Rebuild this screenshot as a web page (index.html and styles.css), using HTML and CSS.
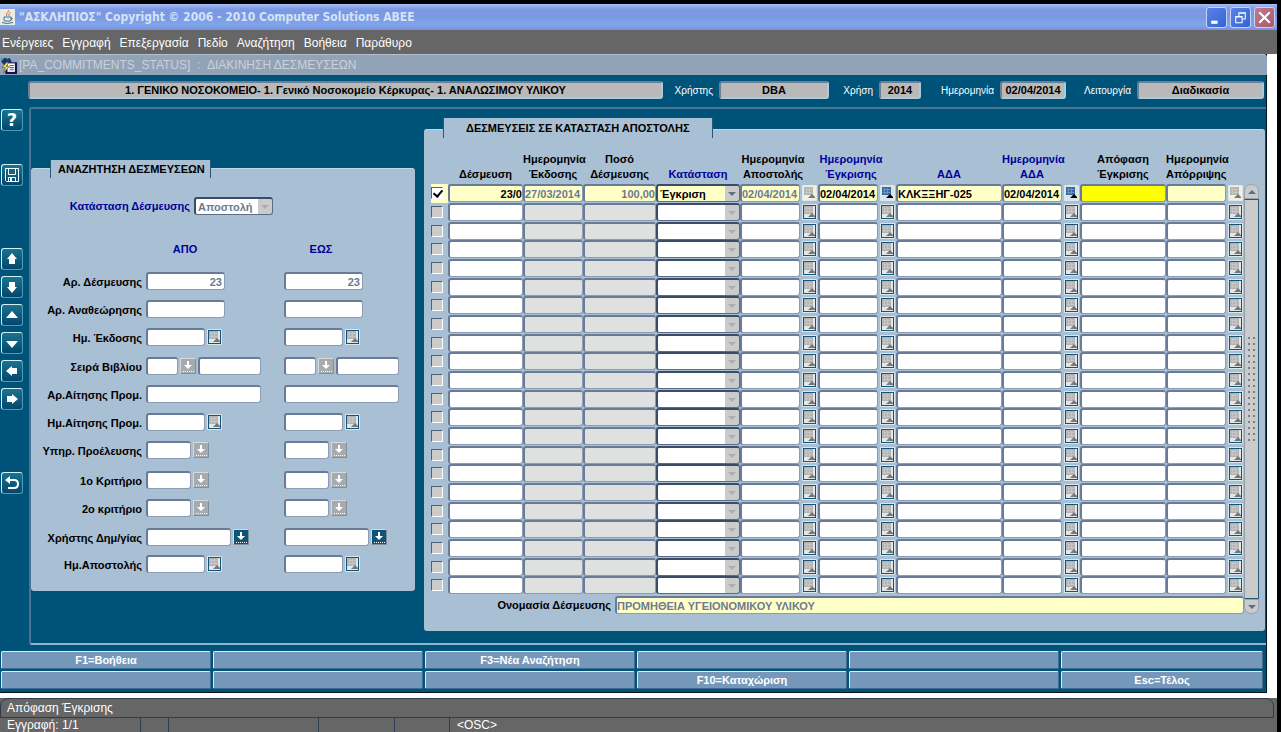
FILE: index.html
```html
<!DOCTYPE html>
<html lang="el">
<head>
  <meta charset="UTF-8" />
  <meta name="viewport" content="width=device-width, initial-scale=1.0" />
  <title>"ΑΣΚΛΗΠΙΟΣ" Copyright © 2006 - 2010 Computer Solutions ABEE</title>
  <link rel="stylesheet" href="styles.css">
</head>
<body>
  <svg class="defs" aria-hidden="true">
    <symbol id="cal" viewBox="0 0 11 12">
      <path class="cal-grid" d="M0 0h9v8h-9z" />
      <path class="cal-lines" d="M1 2.500h7M1 5.500h7M2.500 1v6M5.500 1v6" />
      <path class="cal-tri" d="M4 11l4-4 3 3v1z" />
    </symbol>
    <symbol id="lov" viewBox="0 0 12 13">
      <path d="M5 1h2v4h3L6 9 2 5h3z" fill="#fff" />
      <path d="M1 11.500h11" stroke="#fff" stroke-dasharray="1 1" />
    </symbol>
  </svg>

  <header class="titlebar">
    <svg class="java" viewBox="0 0 15 16" aria-hidden="true">
      <rect width="15" height="16" fill="#e9ebe6" />
      <path d="M8 1c2 2-3 3-1 6M10 3c1 1-2 2-1 4" stroke="#d9661f" fill="none" />
      <path d="M4 8h7v3q0 1-1 1H5q-1 0-1-1zM11 9h1q1 1-1 2" stroke="#3f6f98" fill="none" />
      <path d="M2 13.500q5 2 11 0" stroke="#3f6f98" fill="none" />
    </svg>
    <h1>"ΑΣΚΛΗΠΙΟΣ" Copyright © 2006 - 2010 Computer Solutions ABEE</h1>
    <div class="win-buttons">
      <button type="button" aria-label="Ελαχιστοποίηση"><svg viewBox="0 0 18 18"><path d="M4 12h6v3H4z" fill="#fff" /></svg></button>
      <button type="button" aria-label="Επαναφορά"><svg viewBox="0 0 18 18"><path d="M4.500 8v6h6V8zM4 8.500h7M7.500 8V4.500h6v6H11M7 5h7" stroke="#fff" fill="none" /></svg></button>
      <button type="button" class="close" aria-label="Κλείσιμο"><svg viewBox="0 0 18 18"><path d="M4 4l10 10M14 4L4 14" stroke="#fff" stroke-width="2" fill="none" /></svg></button>
    </div>
  </header>

  <nav class="menubar">
    <a href="#">Ενέργειες</a>
    <a href="#">Εγγραφή</a>
    <a href="#">Επεξεργασία</a>
    <a href="#">Πεδίο</a>
    <a href="#">Αναζήτηση</a>
    <a href="#">Βοήθεια</a>
    <a href="#">Παράθυρο</a>
  </nav>

  <main class="window">
    <div class="form-title">
      <svg viewBox="0 0 16 16" aria-hidden="true">
        <path d="M1 4l3-3h5l2 3-3 4H4z" fill="#17377a" />
        <path d="M1 1h2v2H1zM6 1h2v1H6z" fill="#3f9b9b" />
        <path d="M5 5h11v11H5z" fill="#12124f" />
        <path d="M7 6h7v8H7z" fill="#fff" />
        <path d="M9 8h4M9 10h4M9 12h4" stroke="#7a4b9d" />
        <path d="M6 5L2 10h3l-2 5 6-6H6l2-4z" fill="#f2df4a" stroke="#444" stroke-width=".5" />
      </svg>
      <span>[PA_COMMITMENTS_STATUS] &nbsp;: &nbsp;ΔΙΑΚΙΝΗΣΗ ΔΕΣΜΕΥΣΕΩΝ</span>
    </div>

    <div class="context">
      <input class="org" aria-label="Οργανισμός" readonly value="1. ΓΕΝΙΚΟ ΝΟΣΟΚΟΜΕΙΟ- 1. Γενικό Νοσοκομείο Κέρκυρας- 1. ΑΝΑΛΩΣΙΜΟΥ ΥΛΙΚΟΥ">
      <label class="l-user" for="user">Χρήστης</label>
      <input class="c-user" id="user" readonly value="DBA">
      <label class="l-year" for="year">Χρήση</label>
      <input class="c-year" id="year" readonly value="2014">
      <label class="l-date" for="today">Ημερομηνία</label>
      <input class="c-date" id="today" readonly value="02/04/2014">
      <label class="l-mode" for="mode">Λειτουργία</label>
      <input class="c-mode" id="mode" readonly value="Διαδικασία">
    </div>

    <div class="work">
      <div class="toolbar">
        <button type="button" aria-label="Βοήθεια" class="help">?</button>
        <button type="button" aria-label="Αποθήκευση" class="save"><svg viewBox="0 0 20 20"><path d="M3.500 3.500h13v13h-12l-1-1zM6.500 3.500v6h7v-6M6.500 16.500v-4h7v4" stroke="#fff" fill="none" /><path d="M8 13h2v3H8z" fill="#fff" /></svg></button>
        <button type="button" aria-label="Προηγούμενη εγγραφή" class="prev"><svg viewBox="0 0 20 20"><path d="M10 4l5 6h-2v5H7v-5H5z" /></svg></button>
        <button type="button" aria-label="Επόμενη εγγραφή"><svg viewBox="0 0 20 20"><path d="M10 16l5-6h-2V5H7v5H5z" /></svg></button>
        <button type="button" aria-label="Σελίδα πάνω"><svg viewBox="0 0 20 20"><path d="M10 6l6 7H4z" /></svg></button>
        <button type="button" aria-label="Σελίδα κάτω"><svg viewBox="0 0 20 20"><path d="M10 15l6-7H4z" /></svg></button>
        <button type="button" aria-label="Προηγούμενο πεδίο"><svg viewBox="0 0 20 20"><path d="M4 10l6-5v2h5v6h-5v2z" /></svg></button>
        <button type="button" aria-label="Επόμενο πεδίο"><svg viewBox="0 0 20 20"><path d="M16 10l-6-5v2H5v6h5v2z" /></svg></button>
        <button type="button" aria-label="Επιστροφή" class="back"><svg viewBox="0 0 20 20"><path d="M3 7l5-4v8z" /><path d="M7 7h5q4 0 4 4t-4 4H6" stroke="#fff" stroke-width="2" fill="none" /></svg></button>
      </div>

      <div class="canvas">
        <section class="panel search">
          <h2>ΑΝΑΖΗΤΗΣΗ ΔΕΣΜΕΥΣΕΩΝ</h2>
          <div class="state">
            <label for="state">Κατάσταση Δέσμευσης</label>
            <span class="pick"><select id="state" disabled><option>Αποστολή</option></select></span>
          </div>
          <div class="range-head"><span>ΑΠΟ</span><span>ΕΩΣ</span></div>
          <form class="criteria" id="criteria"></form>
        </section>

        <section class="panel results">
          <h2>ΔΕΣΜΕΥΣΕΙΣ ΣΕ ΚΑΤΑΣΤΑΣΗ ΑΠΟΣΤΟΛΗΣ</h2>
          <div class="grid-area">
            <div class="grid-main">
              <table>
                <colgroup>
                  <col class="w-check"><col class="w-code"><col class="w-date"><col class="w-sum"><col class="w-state">
                  <col class="w-date"><col class="w-cal"><col class="w-date"><col class="w-cal">
                  <col class="w-ada"><col class="w-date"><col class="w-cal"><col class="w-ruling">
                  <col class="w-date"><col class="w-cal">
                </colgroup>
                <thead>
                  <tr>
                    <th></th>
                    <th>Δέσμευση</th>
                    <th>Ημερομηνία<br>Έκδοσης</th>
                    <th>Ποσό<br>Δέσμευσης</th>
                    <th class="req">Κατάσταση</th>
                    <th colspan="2"><span>Ημερομηνία<br>Αποστολής</span></th>
                    <th colspan="2" class="req"><span>Ημερομηνία<br>Έγκρισης</span></th>
                    <th class="req">ΑΔΑ</th>
                    <th class="req">Ημερομηνία<br>ΑΔΑ</th>
                    <th></th>
                    <th>Απόφαση<br>Έγκρισης</th>
                    <th>Ημερομηνία<br>Απόρριψης</th>
                    <th></th>
                  </tr>
                </thead>
                <tbody id="rows"></tbody>
              </table>
              <div class="name-line">
                <label for="name">Ονομασία Δέσμευσης</label>
                <input id="name" readonly value="ΠΡΟΜΗΘΕΙΑ ΥΓΕΙΟΝΟΜΙΚΟΥ ΥΛΙΚΟΥ">
              </div>
            </div>
            <div class="scroll">
              <button type="button" class="up" aria-label="Πάνω"></button>
              <div class="track"><i class="grip"></i></div>
              <button type="button" class="down" aria-label="Κάτω"></button>
            </div>
          </div>
        </section>
      </div>
    </div>

    <div class="keys">
      <button type="button">F1=Βοήθεια</button>
      <button type="button"></button>
      <button type="button">F3=Νέα Αναζήτηση</button>
      <button type="button"></button>
      <button type="button"></button>
      <button type="button"></button>
      <button type="button"></button>
      <button type="button"></button>
      <button type="button"></button>
      <button type="button">F10=Καταχώριση</button>
      <button type="button"></button>
      <button type="button">Esc=Τέλος</button>
    </div>
  </main>

  <footer class="status">
    <div class="hint">Απόφαση Έγκρισης</div>
    <div class="cells">
      <span class="s-rec">Εγγραφή: 1/1</span><span class="s-a"></span><span class="s-b"></span><span class="s-c"></span><span class="s-d"></span><span class="s-osc">&lt;OSC&gt;</span>
    </div>
  </footer>

  <script>
    const cal = (on) => `<button type="button" class="cal${on ? " on" : ""}" aria-label="Ημερολόγιο"><svg><use href="#cal"/></svg></button>`;
    const lov = (on) => `<button type="button" class="lov${on ? " on" : ""}" aria-label="Λίστα τιμών"><svg><use href="#lov"/></svg></button>`;

    // label, kind of field, value
    const criteria = [
      ["Αρ. Δέσμευσης", "num", "23"],
      ["Αρ. Αναθεώρησης", "num", ""],
      ["Ημ. Έκδοσης", "date", ""],
      ["Σειρά Βιβλίου", "book", ""],
      ["Αρ.Αίτησης Προμ.", "wide", ""],
      ["Ημ.Αίτησης Προμ.", "date", ""],
      ["Υπηρ. Προέλευσης", "code", ""],
      ["1ο Κριτήριο", "code", ""],
      ["2ο κριτήριο", "code", ""],
      ["Χρήστης Δημ/γίας", "owner", ""],
      ["Ημ.Αποστολής", "date", ""]
    ];

    function field(kind, id, label, value) {
      const input = `<input class="f-${kind}" id="${id}" aria-label="${label}" value="${value}">`;
      if (kind === "date") return input + cal(false);
      if (kind === "code") return input + lov(false);
      if (kind === "owner") return input + lov(true);
      if (kind === "book") return input + lov(false) + `<input class="f-title" aria-label="${label}">`;
      return input;
    }

    document.getElementById("criteria").innerHTML = criteria.map(([label, kind, value], i) => `
      <label for="from${i}">${label}</label>
      <div class="fields">${field(kind, "from" + i, label + " από", value)}</div>
      <div class="fields">${field(kind, "to" + i, label + " έως", value)}</div>
    `).join("");

    const first = {
      code: "23/0", issued: "27/03/2014", sum: "100,00", state: "Έγκριση", sent: "02/04/2014",
      approved: "02/04/2014", ada: "ΚΛΚΞΞΗΓ-025", adaDate: "02/04/2014"
    };

    function cell(label, value, cls) {
      return `<td><input class="${cls || ""}" aria-label="${label}" value="${value || ""}"></td>`;
    }

    function renderRow(r, i) {
      const on = i === 0;
      return `<tr class="${on ? "current" : ""}">
        <td class="tick"><input type="checkbox" aria-label="Επιλογή"${on ? " checked" : ""}></td>
        ${cell("Δέσμευση", r.code, "right")}
        ${cell("Ημερομηνία Έκδοσης", r.issued, "off")}
        ${cell("Ποσό Δέσμευσης", r.sum, "off right")}
        <td><span class="pick"><select aria-label="Κατάσταση"><option>${r.state || ""}</option></select></span></td>
        ${cell("Ημερομηνία Αποστολής", r.sent, "dim")}
        <td>${cal(false)}</td>
        ${cell("Ημερομηνία Έγκρισης", r.approved)}
        <td>${cal(on)}</td>
        ${cell("ΑΔΑ", r.ada)}
        ${cell("Ημερομηνία ΑΔΑ", r.adaDate)}
        <td>${cal(on)}</td>
        ${cell("Απόφαση Έγκρισης", "", on ? "focus" : "")}
        ${cell("Ημερομηνία Απόρριψης", "")}
        <td>${cal(false)}</td>
      </tr>`;
    }

    const rows = [first];
    while (rows.length < 22) rows.push({});
    document.getElementById("rows").innerHTML = rows.map(renderRow).join("");
  </script>
</body>
</html>
```
FILE: styles.css
```css
* {
  box-sizing: border-box;
}
body {
  margin: 0;
  padding: 4px 4px 0 0;
  height: 100vh;
  overflow: hidden;
  display: flex;
  flex-direction: column;
  background: #000;
  font-family: "Liberation Sans", Arial, sans-serif;
  font-size: 11px;
  font-weight: bold;
  color: #000;
}
input, select, button {
  font: inherit;
  color: inherit;
  margin: 0;
  padding: 0;
  border-radius: 3px;
}
.defs {
  position: absolute;
  width: 0;
  height: 0;
}

/* title bar */
.titlebar {
  flex: none;
  height: 26px;
  display: flex;
  align-items: center;
  gap: 4px;
  padding-right: 2px;
  background: linear-gradient(#a5bdf2, #7c9ae3 20%, #7b99e2 50%, #80a6ea 80%, #7c8fdc);
}
.java {
  width: 15px;
  height: 16px;
}
h1 {
  flex: 1;
  margin: 0;
  font-family: "DejaVu Sans Condensed", "DejaVu Sans", sans-serif;
  font-size: 12px;
  color: #d5e2fa;
}
.win-buttons {
  display: flex;
  gap: 3px;
}
.win-buttons button {
  width: 21px;
  height: 21px;
  border: 1px solid #c5d4f6;
  background: linear-gradient(135deg, #5a83e6, #3563d4);
}
.win-buttons .close {
  background: linear-gradient(135deg, #c07a90, #a9586c);
}
.win-buttons svg {
  display: block;
  width: 100%;
  height: 100%;
}

.menubar {
  flex: none;
  height: 24px;
  display: flex;
  align-items: center;
  gap: 9px;
  padding: 2px 0 0 2px;
  background: #666;
}
.menubar a {
  color: #fff;
  font-size: 12px;
  font-weight: normal;
  text-decoration: none;
}

/* form window */
.window {
  flex: none;
  background: #005378;
  border-right: 10px solid #fff;
  border-bottom: 5px solid #fff;
  box-shadow: inset -1px -1px #00121c;
}
.form-title {
  height: 21px;
  display: flex;
  align-items: center;
  gap: 2px;
  border-top: 1px solid #b4bfcc;
  border-top-right-radius: 4px;
  background: #93a3b7;
  color: #c9d1db;
  font-size: 12px;
  font-weight: normal;
}
.form-title svg {
  width: 17px;
  height: 17px;
}
.context {
  display: flex;
  align-items: center;
  gap: 6px;
  padding: 6px 3px 8px 28px;
}
.context input {
  height: 18px;
  border: 2px solid #6c7f97;
  border-right-color: #aacbdd;
  border-bottom-color: #aacbdd;
  background: #b9b9b9;
  text-align: center;
  min-width: 0;
}
.context label {
  color: #fff;
  font-size: 10px;
  font-weight: normal;
  text-align: right;
}
.context .org {
  flex: 1;
}
.l-user { width: 44px; }
.l-year { width: 38px; }
.l-date { width: 67px; }
.l-mode { width: 59px; }
.c-user { width: 110px; }
.c-year { width: 42px; }
.c-date { width: 66px; }
.c-mode { width: 127px; }

.work {
  display: flex;
}
.toolbar {
  width: 30px;
  display: flex;
  flex-direction: column;
  gap: 6px;
  padding: 2px 0 0 1px;
}
.toolbar button {
  width: 22px;
  height: 22px;
  border: 1px solid #4d9bb4;
  border-top-color: #d4f0f2;
  border-left-color: #d4f0f2;
  background: linear-gradient(#1b7390, #02476c);
  color: #fff;
}
.toolbar svg {
  display: block;
  width: 20px;
  height: 20px;
  fill: #fff;
}
.toolbar .help {
  font-family: "DejaVu Sans", sans-serif;
  font-size: 18px;
  line-height: 18px;
}
.toolbar .save { margin-top: 27px; }
.toolbar .prev { margin-top: 56px; }
.toolbar .back { margin-top: 56px; }

.canvas {
  flex: 1;
  display: flex;
  align-items: flex-start;
  gap: 9px;
  height: 538px;
  margin-right: 1px;
  border: 2px solid #4a7494;
  border-right: 0;
  border-bottom-color: #8fb5cd;
  border-radius: 3px 0 0 3px;
}
.panel {
  background: #a9bfd3;
  border-top: 1px solid #c5d6e3;
  border-radius: 3px;
}
.panel h2 {
  width: max-content;
  margin: -9px 0 0 19px;
  padding: 0 5px 0 7px;
  border-right: 1px solid #24587c;
  border-left: 1px solid #24587c;
  background: #a9bfd3;
  font-size: 11px;
  line-height: 18px;
}

/* inputs on both panels */
.panel input {
  height: 18px;
  padding: 1px 2px 0;
  border: 2px solid #687b98;
  border-right: 1px solid #8c9db3;
  border-bottom: 1px solid #8c9db3;
  background: #fff;
}
.pick {
  position: relative;
  display: block;
}
.pick select {
  appearance: none;
  display: block;
  width: 100%;
  height: 18px;
  padding: 1px 16px 0 2px;
  border: 2px solid #3c4c68;
  border-right: 1px solid #5c6c88;
  border-bottom: 1px solid #5c6c88;
  background: linear-gradient(#cbcbcb, #cbcbcb) right / 14px 100% no-repeat #fff;
  opacity: 1;
}
.pick::after {
  content: "";
  position: absolute;
  right: 4px;
  top: 8px;
  border: 4px solid transparent;
  border-top-color: #adadad;
  border-bottom: 0;
}
.cal, .lov {
  flex: none;
  display: block;
  width: 16px;
  height: 16px;
  border: 1px solid #d9e8ec;
  border-radius: 1px;
}
.cal {
  --grid: #b4b4b4;
  --lines: #c6c6c6;
  --tri: #777;
  width: 15px;
  background: #e3e7e8;
  box-shadow: inset 1px 1px #165477, inset -1px -1px #165477;
}
.cal.on {
  --grid: #38689f;
  --lines: #6d93bd;
  --tri: #000;
}
.cal svg {
  display: block;
  width: 11px;
  height: 12px;
  margin: 1px;
}
.cal-grid { fill: var(--grid); }
.cal-lines { stroke: var(--lines); }
.cal-tri { fill: var(--tri); }
.lov {
  border-color: #d5dadc #858f99 #858f99 #d5dadc;
  background: #a7abae;
}
.lov svg {
  display: block;
  width: 12px;
  height: 13px;
  margin: 0 1px;
}
.lov.on {
  background: #0a5578;
}

/* search panel */
.search {
  flex: none;
  width: 384px;
  height: 423px;
  margin-top: 59px;
}
.state {
  display: flex;
  align-items: center;
  gap: 4px;
  margin-top: 19px;
  padding-left: 34px;
}
.state label {
  width: 125px;
  text-align: right;
  color: #00009c;
}
.state .pick {
  width: 79px;
}
.state select, .search input {
  color: #6d7a90;
}
.range-head {
  display: grid;
  grid-template-columns: 78px 78px;
  column-gap: 58px;
  margin: 27px 0 0 115px;
  text-align: center;
  line-height: 14px;
  color: #00009c;
}
.criteria {
  display: grid;
  grid-template-columns: 111px 134px 116px;
  grid-template-rows: 28px 28px 29px 28px 28px 28px 30px 28px 29px 27px 18px;
  column-gap: 4px;
  margin-top: 16px;
}
.criteria label {
  line-height: 20px;
  text-align: right;
}
.fields {
  display: flex;
  align-items: center;
  height: 18px;
  gap: 2px;
}
.f-num { width: 79px; text-align: right; }
.f-date { width: 59px; }
.f-book { width: 32px; }
.f-title { width: 63px; }
.f-wide { width: 115px; }
.f-code { width: 45px; }
.f-owner { width: 85px; }

/* results panel */
.results {
  flex: 1;
  height: 502px;
  margin-top: 20px;
  margin-right: 1px;
}
.results h2 {
  margin-top: -12px;
  padding: 0 22px;
  line-height: 20px;
}
.grid-area {
  display: flex;
  margin: 14px 6px 0 7px;
}
.grid-main {
  flex: 1;
}
table {
  width: 100%;
  table-layout: fixed;
  border-collapse: collapse;
}
.w-check { width: 17px; }
.w-code { width: 75px; }
.w-date { width: 60px; }
.w-sum { width: 73px; }
.w-state { width: 84px; }
.w-cal { width: 18px; }
.w-ada { width: 106px; }
.w-ruling { width: 86px; }
th {
  height: 32px;
  padding: 0 0 2px;
  vertical-align: bottom;
  line-height: 15px;
  white-space: nowrap;
}
th span {
  display: inline-block;
  margin-right: 12px;
}
.req {
  color: #00009c;
}
td {
  height: 19px;
  padding: 0;
  vertical-align: top;
}
tr:nth-child(3n) td {
  height: 18px;
}
td input {
  display: block;
  width: 100%;
}
.panel td input {
  padding: 1px 0 0;
}
td .cal {
  margin: 1px auto 0;
}
td .off {
  background: #dfe1e1;
}
.right {
  text-align: right;
}
.panel td input[type="checkbox"] {
  appearance: none;
  width: 12px;
  height: 12px;
  margin-top: 3px;
  padding: 0;
  border: 1px solid #50607a;
  border-right-color: #fff;
  border-bottom-color: #fff;
  border-radius: 0;
  background: #cbcbcb;
}
.panel td input[type="checkbox"]:checked {
  background: #fff;
}
td input[type="checkbox"]:checked::after {
  content: "";
  display: block;
  width: 4px;
  height: 7px;
  margin: 0 0 0 3px;
  border: solid #000;
  border-width: 0 2px 2px 0;
  transform: rotate(40deg);
}
.current .tick {
  background: #ffffc8;
}
.current input, .current select {
  background-color: #ffffc8;
}
.current td input {
  background: #ffffc8;
}
.current .off, .current .dim {
  color: #6d7a90;
}
.current td input.focus {
  background: #ff0;
}
.current .pick::after {
  border-top-color: #5d6c88;
}
.current .cal {
  background: #f2f2da;
  box-shadow: none;
}
.current .cal.on {
  background: #dfe3e4;
}
.name-line {
  display: flex;
  align-items: center;
  gap: 4px;
  margin-top: 1px;
}
.name-line label {
  width: 180px;
  text-align: right;
}
.panel .name-line input {
  flex: 1;
  padding: 0;
  background: #ffffc8;
  color: #6d7a90;
}
.panel .current input {
  background: #ffffc8;
}
.panel .current input.focus {
  background: #ff0;
}
.panel tr:not(.current) .off {
  background: #dfe1e1;
}

.scroll {
  width: 15px;
  display: flex;
  flex-direction: column;
  padding-top: 32px;
}
.scroll button {
  height: 15px;
  border: 1px solid #9aa3ad;
  background: #cbcbcb;
}
.scroll button::after {
  content: "";
  display: block;
  width: 0;
  margin: 0 auto;
  border: 4px solid transparent;
}
.scroll .up {
  border-radius: 7px 7px 0 0;
}
.scroll .down {
  border-radius: 0 0 7px 7px;
}
.scroll .up::after {
  border-top: 0;
  border-bottom-color: #5d6c88;
}
.scroll .down::after {
  border-bottom: 0;
  border-top-color: #5d6c88;
}
.track {
  flex: 1;
  display: flex;
  align-items: center;
  justify-content: center;
  padding-bottom: 22px;
  border: 1px solid #24587c;
  border-left-color: #8f9daa;
  background: #cbcbcb;
}
.grip {
  width: 8px;
  height: 108px;
  background:
    linear-gradient(#7f7f7f, #7f7f7f) 0 2px / 1px 1px,
    linear-gradient(#cbcbcb, #cbcbcb);
  background:
    radial-gradient(circle at 1px 4px, #7f7f7f 1px, transparent 1px) 0 0 / 5px 6px;
}

/* function keys */
.keys {
  display: grid;
  grid-template-columns: repeat(5, 210fr) 202fr;
  gap: 2px;
  padding: 6px 4px 4px 1px;
}
.keys button {
  height: 18px;
  border: 1px solid #3e6c92;
  border-top-color: #dceef2;
  border-left-color: #dceef2;
  border-radius: 2px;
  background: #7598ba;
  color: #fff;
}

.status {
  flex: 1;
  display: flex;
  flex-direction: column;
  background: #666;
  color: #fff;
  font-size: 12px;
  font-weight: normal;
  line-height: 19px;
  min-height: 0;
  overflow: hidden;
  padding-right: 3px;
}
.hint {
  flex: none;
  height: 20px;
  padding-left: 6px;
  border: 1px solid #2f3b50;
  border-radius: 8px 8px 0 0;
}
.cells {
  flex: 1;
  display: flex;
  padding-left: 7px;
  line-height: 14px;
}
.cells span + span {
  border-left: 1px solid #2f3b50;
}
.s-rec { width: 133px; }
.s-a { width: 28px; }
.s-b { width: 150px; }
.s-c { width: 76px; }
.s-d { width: 55px; }
.s-osc {
  flex: 1;
  padding-left: 7px;
}
```
